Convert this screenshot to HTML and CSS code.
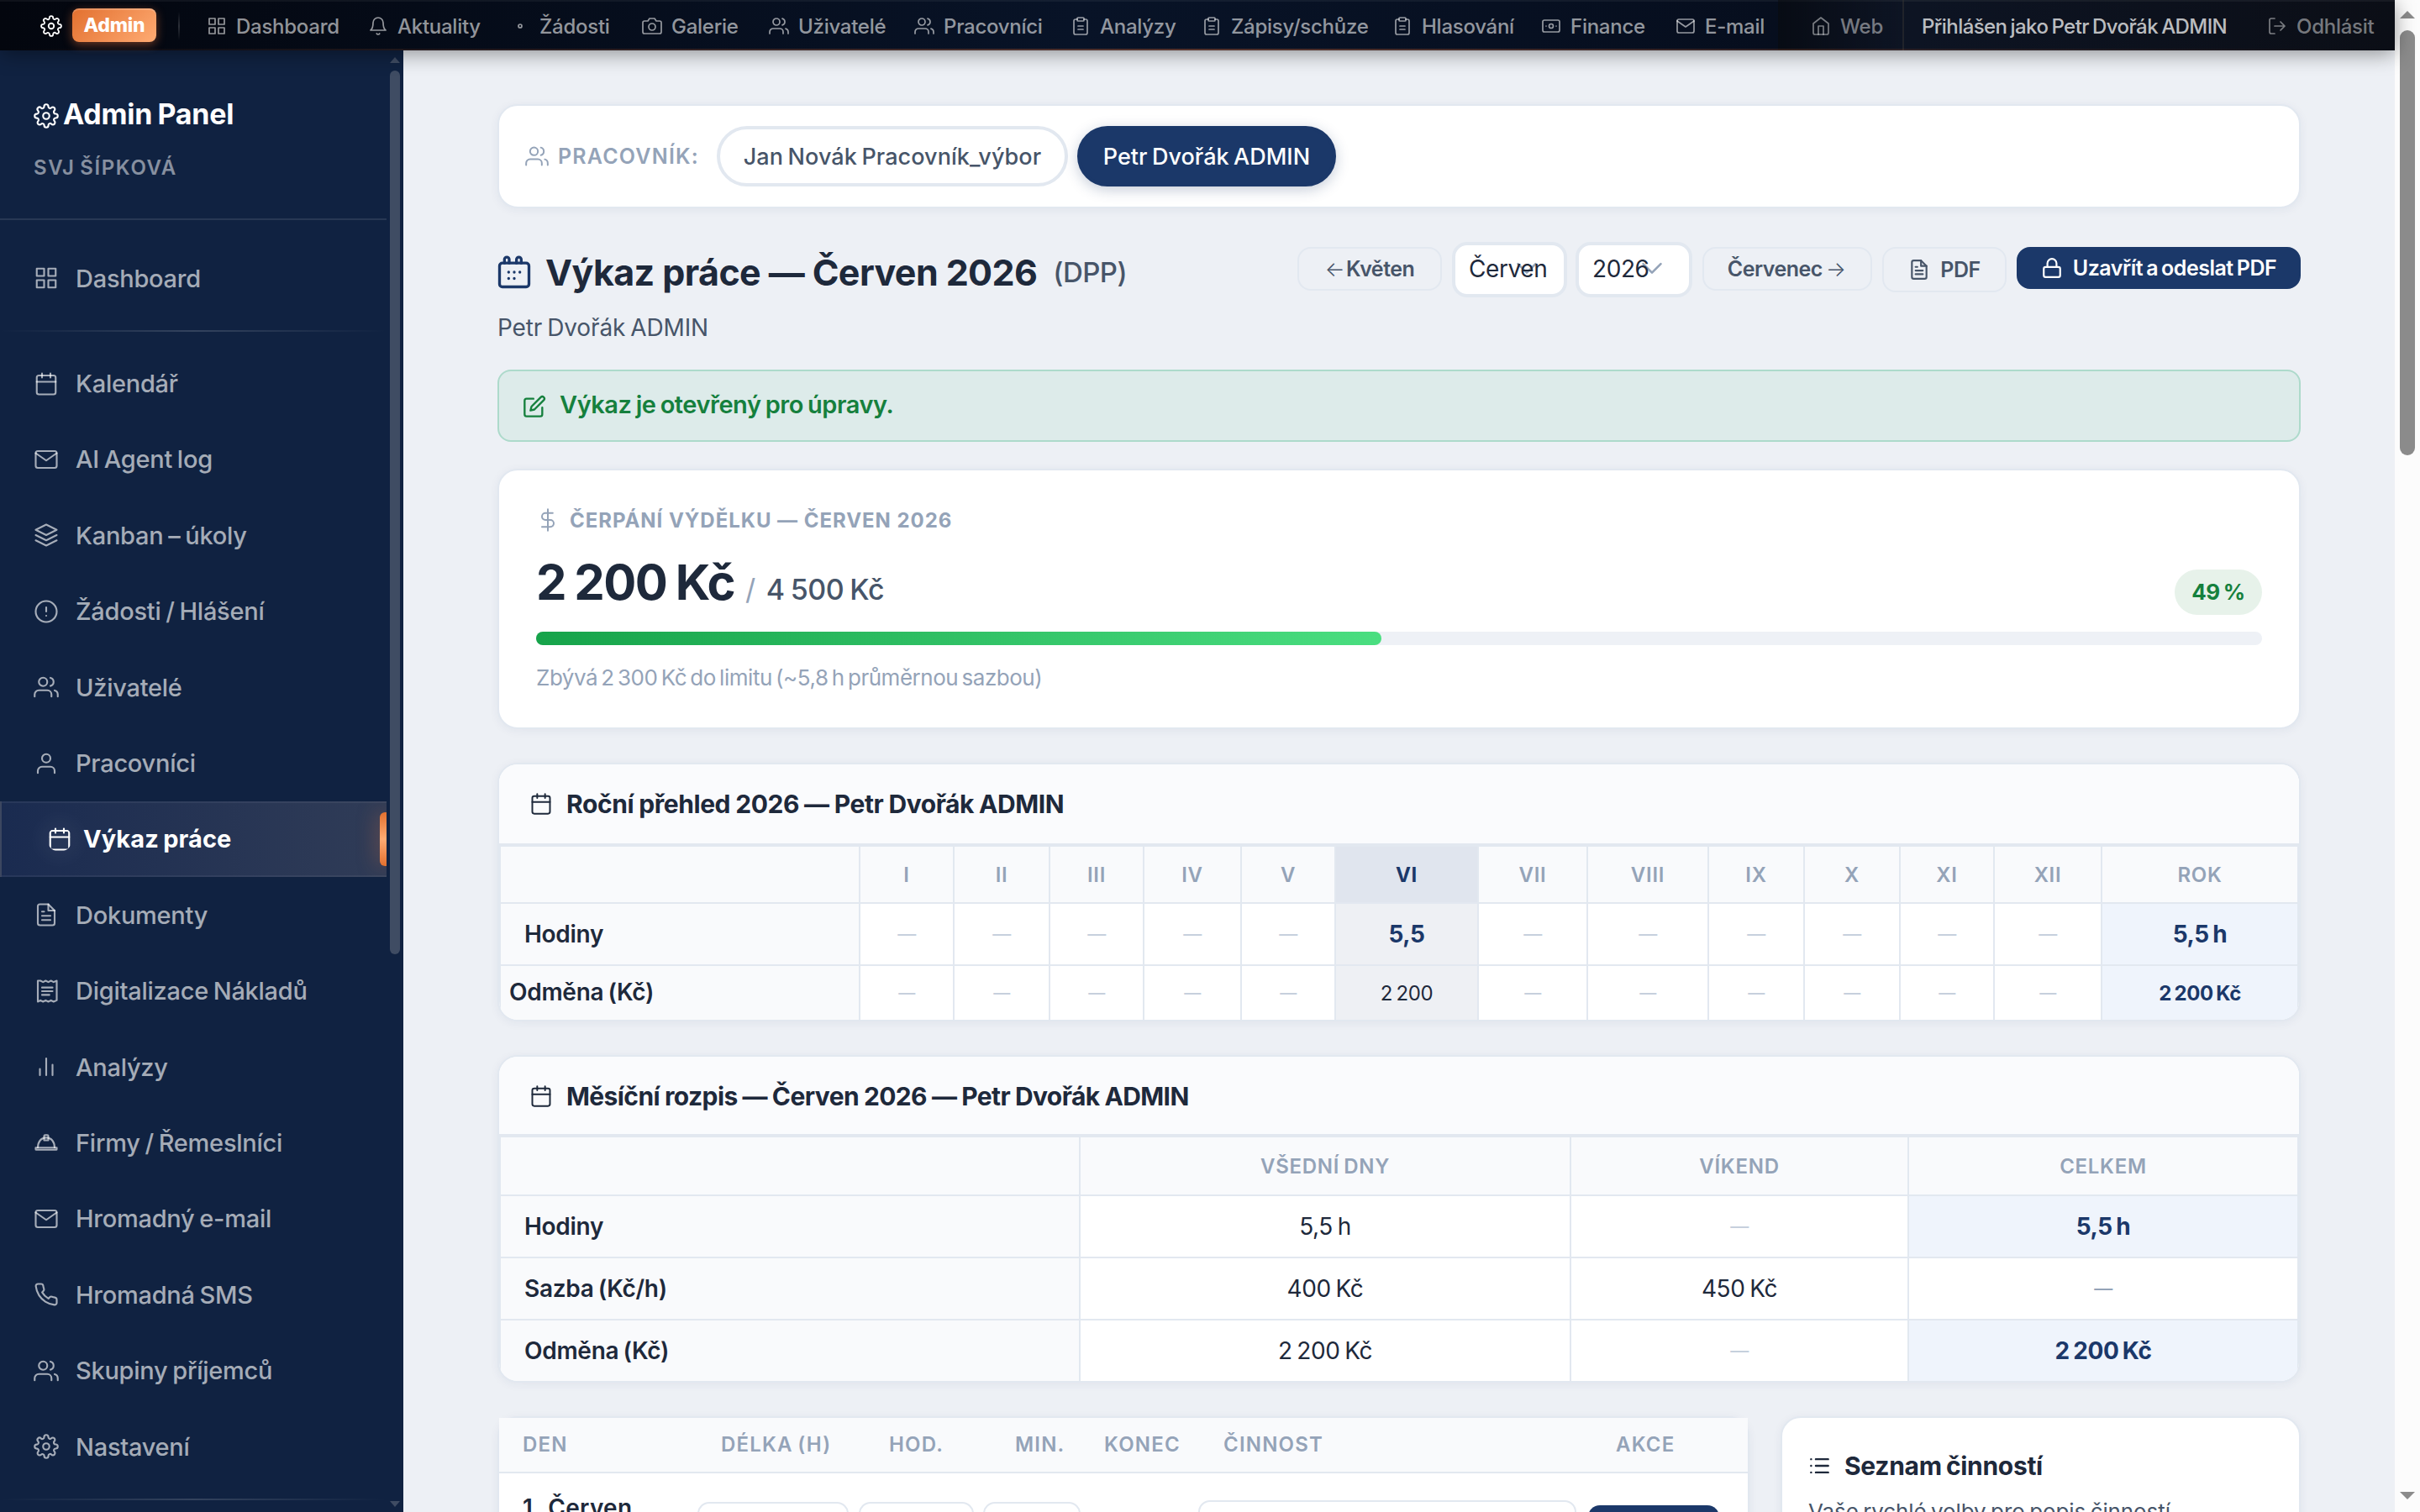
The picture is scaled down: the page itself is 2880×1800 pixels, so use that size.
FILE: index.html
```html
<!DOCTYPE html>
<html lang="cs">
  <head>
    <meta charset="UTF-8" />
    <meta name="viewport" content="width=device-width, initial-scale=1.0" />
    <title>Výkaz práce – Admin Panel</title>
    <link rel="stylesheet" href="styles.css">
  </head>
  <body>
    <svg class="sprite" aria-hidden="true">
      <symbol id="i-gear" viewBox="0 0 24 24"><circle cx="12" cy="12" r="3"/><path d="M19.4 15a1.65 1.65 0 0 0 .33 1.82l.06.06a2 2 0 1 1-2.83 2.83l-.06-.06a1.65 1.65 0 0 0-1.82-.33 1.65 1.65 0 0 0-1 1.51V21a2 2 0 0 1-4 0v-.09A1.65 1.65 0 0 0 9 19.4a1.65 1.65 0 0 0-1.82.33l-.06.06a2 2 0 1 1-2.83-2.83l.06-.06a1.65 1.65 0 0 0 .33-1.82 1.65 1.65 0 0 0-1.51-1H3a2 2 0 0 1 0-4h.09A1.65 1.65 0 0 0 4.6 9a1.65 1.65 0 0 0-.33-1.82l-.06-.06a2 2 0 1 1 2.83-2.83l.06.06a1.65 1.65 0 0 0 1.82.33H9a1.65 1.65 0 0 0 1-1.51V3a2 2 0 0 1 4 0v.09a1.65 1.65 0 0 0 1 1.51 1.65 1.65 0 0 0 1.82-.33l.06-.06a2 2 0 1 1 2.83 2.83l-.06.06a1.65 1.65 0 0 0-.33 1.82V9a1.65 1.65 0 0 0 1.51 1H21a2 2 0 0 1 0 4h-.09a1.65 1.65 0 0 0-1.51 1z"/></symbol>
      <symbol id="i-grid" viewBox="0 0 24 24"><rect x="3" y="3" width="7" height="7"/><rect x="14" y="3" width="7" height="7"/><rect x="3" y="14" width="7" height="7"/><rect x="14" y="14" width="7" height="7"/></symbol>
      <symbol id="i-bell" viewBox="0 0 24 24"><path d="M18 8A6 6 0 0 0 6 8c0 7-3 9-3 9h18s-3-2-3-9"/><path d="M13.73 21a2 2 0 0 1-3.46 0"/></symbol>
      <symbol id="i-dot" viewBox="0 0 24 24"><circle cx="12" cy="12" r="2"/></symbol>
      <symbol id="i-camera" viewBox="0 0 24 24"><path d="M23 19a2 2 0 0 1-2 2H3a2 2 0 0 1-2-2V8a2 2 0 0 1 2-2h4l2-3h6l2 3h4a2 2 0 0 1 2 2z"/><circle cx="12" cy="13" r="4"/></symbol>
      <symbol id="i-users" viewBox="0 0 24 24"><path d="M17 21v-2a4 4 0 0 0-4-4H5a4 4 0 0 0-4 4v2"/><circle cx="9" cy="7" r="4"/><path d="M23 21v-2a4 4 0 0 0-3-3.87"/><path d="M16 3.13a4 4 0 0 1 0 7.75"/></symbol>
      <symbol id="i-user" viewBox="0 0 24 24"><path d="M20 21v-2a4 4 0 0 0-4-4H8a4 4 0 0 0-4 4v2"/><circle cx="12" cy="7" r="4"/></symbol>
      <symbol id="i-clip" viewBox="0 0 24 24"><path d="M16 4h2a2 2 0 0 1 2 2v14a2 2 0 0 1-2 2H6a2 2 0 0 1-2-2V6a2 2 0 0 1 2-2h2"/><rect x="8" y="2" width="8" height="4" rx="1"/><path d="M9 12h6M9 16h6"/></symbol>
      <symbol id="i-cash" viewBox="0 0 24 24"><rect x="2" y="5" width="20" height="14" rx="2"/><circle cx="12" cy="12" r="2.5"/><path d="M6 12h.01M18 12h.01"/></symbol>
      <symbol id="i-mail" viewBox="0 0 24 24"><rect x="2" y="4" width="20" height="16" rx="2"/><path d="M22 6l-10 7L2 6"/></symbol>
      <symbol id="i-home" viewBox="0 0 24 24"><path d="M3 9l9-7 9 7v11a2 2 0 0 1-2 2H5a2 2 0 0 1-2-2z"/><path d="M9 22V12h6v10"/></symbol>
      <symbol id="i-logout" viewBox="0 0 24 24"><path d="M9 21H5a2 2 0 0 1-2-2V5a2 2 0 0 1 2-2h4M16 17l5-5-5-5M21 12H9"/></symbol>
      <symbol id="i-cal" viewBox="0 0 24 24"><rect x="3" y="4" width="18" height="18" rx="2"/><path d="M16 2v4M8 2v4M3 10h18"/></symbol>
      <symbol id="i-layers" viewBox="0 0 24 24"><path d="M12 2L2 7l10 5 10-5-10-5zM2 17l10 5 10-5M2 12l10 5 10-5"/></symbol>
      <symbol id="i-alert" viewBox="0 0 24 24"><circle cx="12" cy="12" r="10"/><path d="M12 8v4M12 16h.01"/></symbol>
      <symbol id="i-doc" viewBox="0 0 24 24"><path d="M14 2H6a2 2 0 0 0-2 2v16a2 2 0 0 0 2 2h12a2 2 0 0 0 2-2V8z"/><path d="M14 2v6h6M16 13H8M16 17H8M10 9H8"/></symbol>
      <symbol id="i-receipt" viewBox="0 0 24 24"><path d="M4 2v20l2.5-1.3L9 22l2.5-1.3L14 22l2.5-1.3L19 22l3-1.3V2l-3 1.3L16.500 2 14 3.300 11.500 2 9 3.300 6.500 2z"/><path d="M8 8.500h10M8 12h10M8 15.500h7"/></symbol>
      <symbol id="i-bars" viewBox="0 0 24 24"><path d="M18 20V10M12 20V4M6 20v-6"/></symbol>
      <symbol id="i-hat" viewBox="0 0 24 24"><path d="M2 17h20v1.500a.5.5 0 0 1-.5.5h-19a.5.5 0 0 1-.5-.5z"/><path d="M4 17c0-5.500 3-9.500 8-9.500s8 4 8 9.500"/><path d="M10 10V6a1 1 0 0 1 1-1h2a1 1 0 0 1 1 1v4z"/></symbol>
      <symbol id="i-phone" viewBox="0 0 24 24"><path d="M22 16.920v3a2 2 0 0 1-2.180 2 19.790 19.790 0 0 1-8.630-3.070 19.500 19.500 0 0 1-6-6A19.790 19.790 0 0 1 2.120 4.180 2 2 0 0 1 4.110 2h3a2 2 0 0 1 2 1.720c.13.960.36 1.900.7 2.810a2 2 0 0 1-.45 2.110L8.090 9.910a16 16 0 0 0 6 6l1.270-1.270a2 2 0 0 1 2.110-.45c.91.340 1.850.570 2.810.7A2 2 0 0 1 22 16.920z"/></symbol>
      <symbol id="i-calrings" viewBox="0 0 24 24"><rect x="1.500" y="5.500" width="21" height="17" rx="2"/><path d="M5 5.500V3a1.700 1.700 0 0 1 3.400 0v2.500M13.600 5.500V3a1.700 1.700 0 0 1 3.400 0v2.500M8 12h.01M12 12h.01M16 12h.01M8 16.500h.01M12 16.500h.01"/></symbol>
      <symbol id="i-edit" viewBox="0 0 24 24"><path d="M11 4H4a2 2 0 0 0-2 2v14a2 2 0 0 0 2 2h14a2 2 0 0 0 2-2v-7"/><path d="M18.500 2.500a2.120 2.120 0 0 1 3 3L12 15l-4 1 1-4z"/></symbol>
      <symbol id="i-dollar" viewBox="0 0 24 24"><path d="M12 1v22M17 5H9.500a3.500 3.500 0 0 0 0 7h5a3.500 3.500 0 0 1 0 7H6"/></symbol>
      <symbol id="i-lock" viewBox="0 0 24 24"><rect x="3" y="11" width="18" height="11" rx="2"/><path d="M7 11V7a5 5 0 0 1 10 0v4"/></symbol>
      <symbol id="i-list" viewBox="0 0 24 24"><path d="M8 5h13M8 12h13M8 19h13M3 5h.01M3 12h.01M3 19h.01"/></symbol>
      <symbol id="i-chevron" viewBox="0 0 24 24"><path d="M3 7l9 9 9-9"/></symbol>
    </svg>

    <header class="topbar">
      <svg class="icon topbar-gear"><use href="#i-gear"/></svg>
      <span class="topbar-badge">Admin</span>
      <span class="topbar-sep"></span>
      <nav class="topbar-nav">
        <a><svg class="icon"><use href="#i-grid"/></svg>Dashboard</a>
        <a><svg class="icon"><use href="#i-bell"/></svg>Aktuality</a>
        <a><svg class="icon"><use href="#i-dot"/></svg>Žádosti</a>
        <a><svg class="icon"><use href="#i-camera"/></svg>Galerie</a>
        <a><svg class="icon"><use href="#i-users"/></svg>Uživatelé</a>
        <a><svg class="icon"><use href="#i-users"/></svg>Pracovníci</a>
        <a><svg class="icon"><use href="#i-clip"/></svg>Analýzy</a>
        <a><svg class="icon"><use href="#i-clip"/></svg>Zápisy/schůze</a>
        <a><svg class="icon"><use href="#i-clip"/></svg>Hlasování</a>
        <a><svg class="icon"><use href="#i-cash"/></svg>Finance</a>
        <a><svg class="icon"><use href="#i-mail"/></svg>E-mail</a>
      </nav>
      <div class="topbar-right">
        <a class="topbar-web"><svg class="icon"><use href="#i-home"/></svg>Web</a>
        <span class="topbar-user">Přihlášen jako Petr Dvořák ADMIN</span>
        <a class="topbar-logout"><svg class="icon"><use href="#i-logout"/></svg>Odhlásit</a>
      </div>
    </header>

    <div class="layout">
      <aside class="sidebar">
        <div class="sidebar-body">
          <div class="sidebar-head">
            <div class="sidebar-title"><svg class="icon"><use href="#i-gear"/></svg>Admin Panel</div>
            <div class="sidebar-sub">SVJ ŠÍPKOVÁ</div>
          </div>
          <nav class="side-nav">
            <a><svg class="icon"><use href="#i-grid"/></svg>Dashboard</a>
            <hr />
            <a><svg class="icon"><use href="#i-cal"/></svg>Kalendář</a>
            <a><svg class="icon"><use href="#i-mail"/></svg>AI Agent log</a>
            <a><svg class="icon"><use href="#i-layers"/></svg>Kanban – úkoly</a>
            <a><svg class="icon"><use href="#i-alert"/></svg>Žádosti / Hlášení</a>
            <a><svg class="icon"><use href="#i-users"/></svg>Uživatelé</a>
            <a><svg class="icon"><use href="#i-user"/></svg>Pracovníci</a>
            <a class="active"><svg class="icon"><use href="#i-cal"/></svg>Výkaz práce</a>
            <a><svg class="icon"><use href="#i-doc"/></svg>Dokumenty</a>
            <a><svg class="icon"><use href="#i-receipt"/></svg>Digitalizace Nákladů</a>
            <a><svg class="icon"><use href="#i-bars"/></svg>Analýzy</a>
            <a><svg class="icon"><use href="#i-hat"/></svg>Firmy / Řemeslníci</a>
            <a><svg class="icon"><use href="#i-mail"/></svg>Hromadný e-mail</a>
            <a><svg class="icon"><use href="#i-phone"/></svg>Hromadná SMS</a>
            <a><svg class="icon"><use href="#i-users"/></svg>Skupiny příjemců</a>
            <a><svg class="icon"><use href="#i-gear"/></svg>Nastavení</a>
            <hr />
          </nav>
        </div>
        <div class="side-scroll">
          <span class="arrow up"></span>
          <span class="thumb"></span>
          <span class="arrow down"></span>
        </div>
      </aside>

      <main class="content">
        <section class="card picker">
          <span class="picker-label"><svg class="icon"><use href="#i-users"/></svg>PRACOVNÍK:</span>
          <a class="pill">Jan Novák Pracovník_výbor</a>
          <a class="pill pill-active">Petr Dvořák ADMIN</a>
        </section>

        <div class="page-head">
          <div>
            <h1><svg class="icon"><use href="#i-calrings"/></svg>Výkaz práce — Červen 2026 <small>(DPP)</small></h1>
            <p class="page-sub">Petr Dvořák ADMIN</p>
          </div>
          <div class="toolbar">
            <a class="btn btn-prev"><span class="arr">←</span>Květen</a>
            <div class="select select-month"><svg class="icon"><use href="#i-chevron"/></svg><span>Červen</span></div>
            <div class="select select-year"><svg class="icon"><use href="#i-chevron"/></svg><span>2026</span></div>
            <a class="btn btn-next">Červenec<span class="arr">→</span></a>
            <a class="btn btn-pdf"><svg class="icon"><use href="#i-doc"/></svg>PDF</a>
            <a class="btn btn-primary"><svg class="icon"><use href="#i-lock"/></svg>Uzavřít a odeslat PDF</a>
          </div>
        </div>

        <div class="alert"><svg class="icon"><use href="#i-edit"/></svg>Výkaz je otevřený pro úpravy.</div>

        <section class="card earnings">
          <div class="earnings-label"><svg class="icon"><use href="#i-dollar"/></svg>ČERPÁNÍ VÝDĚLKU — ČERVEN 2026</div>
          <div class="earnings-row">
            <div class="earnings-value"><b>2 200 Kč</b><i>/</i><span>4 500 Kč</span></div>
            <span class="earnings-pct">49 %</span>
          </div>
          <div class="progress"><div class="progress-fill" style="width: 49%"></div></div>
          <p class="earnings-note">Zbývá 2 300 Kč do limitu (~5,8 h průměrnou sazbou)</p>
        </section>

        <section class="card table-card">
          <h2><svg class="icon"><use href="#i-cal"/></svg>Roční přehled 2026 — Petr Dvořák ADMIN</h2>
          <table class="sheet year">
            <colgroup>
              <col class="y-label" /><col class="y1" /><col class="y2" /><col class="y3" /><col class="y4" /><col class="y5" /><col class="y6" /><col class="y7" /><col class="y8" /><col class="y9" /><col class="y10" /><col class="y11" /><col class="y12" /><col class="y-sum" />
            </colgroup>
            <tr>
              <th></th><th>I</th><th>II</th><th>III</th><th>IV</th><th>V</th><th class="now">VI</th><th>VII</th><th>VIII</th><th>IX</th><th>X</th><th>XI</th><th>XII</th><th>ROK</th>
            </tr>
            <tr class="hours">
              <td class="label">Hodiny</td><td class="nil">—</td><td class="nil">—</td><td class="nil">—</td><td class="nil">—</td><td class="nil">—</td><td class="now">5,5</td><td class="nil">—</td><td class="nil">—</td><td class="nil">—</td><td class="nil">—</td><td class="nil">—</td><td class="nil">—</td><td class="sum">5,5 h</td>
            </tr>
            <tr class="reward">
              <td class="label">Odměna (Kč)</td><td class="nil">—</td><td class="nil">—</td><td class="nil">—</td><td class="nil">—</td><td class="nil">—</td><td class="now">2 200</td><td class="nil">—</td><td class="nil">—</td><td class="nil">—</td><td class="nil">—</td><td class="nil">—</td><td class="nil">—</td><td class="sum">2 200 Kč</td>
            </tr>
          </table>
        </section>

        <section class="card table-card">
          <h2 class="h-month"><svg class="icon"><use href="#i-cal"/></svg>Měsíční rozpis — Červen 2026 — Petr Dvořák ADMIN</h2>
          <table class="sheet month">
            <colgroup>
              <col class="m-label" /><col class="m-work" /><col class="m-weekend" /><col class="m-sum" />
            </colgroup>
            <tr><th></th><th>VŠEDNÍ DNY</th><th>VÍKEND</th><th>CELKEM</th></tr>
            <tr><td class="label">Hodiny</td><td>5,5 h</td><td class="nil">—</td><td class="sum">5,5 h</td></tr>
            <tr><td class="label">Sazba (Kč/h)</td><td>400 Kč</td><td>450 Kč</td><td class="muted">—</td></tr>
            <tr><td class="label">Odměna (Kč)</td><td>2 200 Kč</td><td class="nil">—</td><td class="sum">2 200 Kč</td></tr>
          </table>
        </section>

        <div class="columns">
          <section class="card days">
            <div class="days-row days-head">
              <span>DEN</span><span>DÉLKA (H)</span><span>HOD.</span><span>MIN.</span><span>KONEC</span><span>ČINNOST</span><span>AKCE</span>
            </div>
            <div class="days-row days-item">
              <b>1. Červen</b>
              <span class="field"></span>
              <span class="field"></span>
              <span class="field"></span>
              <span></span>
              <span class="field field-text"></span>
              <span class="days-save"></span>
            </div>
          </section>
          <section class="card activities">
            <h3><svg class="icon"><use href="#i-list"/></svg>Seznam činností</h3>
            <p>Vaše rychlé volby pro popis činností.</p>
          </section>
        </div>
      </main>

      <div class="page-scroll">
        <span class="arrow up"></span>
        <span class="thumb"></span>
        <span class="arrow down"></span>
      </div>
    </div>
  </body>
</html>
```
FILE: styles.css
```css
:root {
  --navy: #1b3869;
  --sidebar: #102241;
  --bg: #edf0f5;
  --line: #e2e8f0;
  --text: #1e293b;
  --text-2: #475569;
  --muted: #94a3b8;
  --green: #15803d;
}

* {
  box-sizing: border-box;
}

body {
  margin: 0;
  width: 2880px;
  height: 1800px;
  overflow: hidden;
  font-family: Inter, "Open Sans", sans-serif;
  font-size: 28px;
  letter-spacing: -0.015em;
  word-spacing: -0.06em;
  color: var(--text);
  background: var(--bg);
}

h1,
h2,
h3,
p {
  margin: 0;
}

.sprite {
  display: none;
}

.icon {
  width: 28px;
  height: 28px;
  flex: none;
  fill: none;
  stroke: currentColor;
  stroke-width: 1.7;
  stroke-linecap: round;
  stroke-linejoin: round;
}

/* top bar */
.topbar {
  position: relative;
  z-index: 2;
  display: flex;
  align-items: center;
  width: 2850px;
  height: 60px;
  padding: 2px 0 0 48px;
  font-size: 24px;
  font-weight: 550;
  letter-spacing: -0.011em;
  color: rgba(255, 255, 255, 0.58);
  background: linear-gradient(90deg, #03060e, #081327 45%, #060d1c 80%, #04070f);
  box-shadow: 0 4px 24px rgba(0, 0, 0, 0.4), inset 0 2px 0 rgba(255, 255, 255, 0.05);
}

.topbar::after {
  content: "";
  position: absolute;
  left: 0;
  right: 0;
  bottom: 0;
  height: 2px;
  background: linear-gradient(90deg, transparent, rgba(232, 115, 58, 0.35), transparent);
}

.topbar .icon {
  width: 24px;
  height: 24px;
}

.topbar .topbar-gear {
  width: 26px;
  height: 26px;
  color: #fff;
}

.topbar-badge {
  width: 100px;
  height: 40px;
  margin: -2px 0 0 12px;
  border-radius: 8px;
  font-size: 23px;
  font-weight: 800;
  line-height: 41px;
  text-align: center;
  color: #fff;
  background: linear-gradient(135deg, #e2702f, #ffab73);
  box-shadow: 0 3px 12px rgba(232, 115, 58, 0.45), inset 0 2px 0 rgba(255, 255, 255, 0.2);
}

.topbar-sep {
  width: 2px;
  height: 34px;
  margin: 0 32px 0 26px;
  background: linear-gradient(transparent, rgba(255, 255, 255, 0.16), transparent);
}

.topbar-nav {
  display: grid;
  grid-template-columns: 192px 169px 157px 151px 173px 186px 156px 227px 177px 160px 120px;
}

.topbar a {
  display: flex;
  align-items: center;
  gap: 11px;
}

.topbar-right {
  display: flex;
  align-items: center;
  align-self: stretch;
  width: 734px;
  margin: -2px 0 0 auto;
  padding-top: 2px;
  background: rgba(255, 255, 255, 0.03);
}

.topbar .topbar-web {
  width: 150px;
  height: 60px;
  margin-top: -2px;
  padding: 2px 0 0 39px;
  border-right: 2px solid rgba(255, 255, 255, 0.1);
  color: rgba(255, 255, 255, 0.46);
  background: linear-gradient(90deg, rgba(0, 0, 0, 0.45), transparent);
}

.topbar-user {
  width: 432px;
  padding-left: 21px;
  letter-spacing: -0.024em;
  color: rgba(255, 255, 255, 0.74);
}

.topbar .topbar-logout {
  color: rgba(255, 255, 255, 0.46);
}

/* layout */
.layout {
  display: flex;
  width: 2880px;
  height: 1740px;
}

.sidebar {
  display: flex;
  justify-content: space-between;
  width: 480px;
  height: 1740px;
  flex: none;
  overflow: hidden;
  color: rgba(255, 255, 255, 0.63);
  background: var(--sidebar);
}

.sidebar-body {
  width: 460px;
}

.sidebar-head {
  height: 202px;
  padding: 53px 40px 0;
  border-bottom: 2px solid rgba(255, 255, 255, 0.1);
}

.sidebar-title {
  display: flex;
  align-items: center;
  gap: 5px;
  height: 44px;
  font-size: 34px;
  font-weight: 700;
  letter-spacing: -0.007em;
  color: #fff;
}

.sidebar-title .icon {
  width: 30px;
  height: 30px;
  margin-top: 6px;
}

.sidebar-sub {
  margin-top: 25px;
  font-size: 24px;
  font-weight: 600;
  line-height: 36px;
  letter-spacing: 0.066em;
  color: rgba(255, 255, 255, 0.5);
}

.side-nav {
  padding-top: 24px;
}

.side-nav a {
  position: relative;
  display: flex;
  align-items: center;
  gap: 20px;
  height: 90.4px;
  padding-left: 40px;
  font-size: 29px;
  font-weight: 500;
  letter-spacing: -0.009em;
}

.side-nav .icon {
  width: 30px;
  height: 30px;
}

.side-nav hr {
  height: 2px;
  margin: 17px 0 16px;
  border: 0;
  background: linear-gradient(90deg, transparent, rgba(255, 255, 255, 0.15), transparent);
}

.side-nav .active {
  gap: 13px;
  padding-left: 54px;
  border: 2px solid rgba(255, 255, 255, 0.06);
  border-right: 0;
  font-weight: 700;
  letter-spacing: 0.003em;
  color: #fff;
  background: linear-gradient(90deg, #1a2b50, #303c57);
}

.side-nav .active .icon {
  border-radius: 50%;
  background: rgba(255, 255, 255, 0.04);
  box-shadow: 0 0 24px 10px rgba(255, 255, 255, 0.04);
}

.side-nav .active::after {
  content: "";
  position: absolute;
  top: 11px;
  right: 0;
  width: 8px;
  height: 64px;
  border-radius: 6px 0 0 6px;
  background: linear-gradient(#e2702f, #ffab73, #e2702f);
  box-shadow: 0 0 24px rgba(232, 115, 58, 0.55);
  clip-path: inset(-13px 0 -13px -30px);
}

/* scrollbars */
.side-scroll,
.page-scroll {
  display: flex;
  flex-direction: column;
  align-items: center;
}

.side-scroll {
  width: 12px;
  margin-right: 4px;
  padding: 8px 0 6px;
}

.side-scroll .thumb {
  width: 12px;
  height: 1052px;
  margin: 9px 0 auto;
  border-radius: 6px;
  background: #3f4c63;
}

.page-scroll {
  width: 30px;
  height: 1800px;
  margin-top: -60px;
  padding: 13px 0 15px;
  background: #fcfcfc;
}

.page-scroll .thumb {
  width: 18px;
  height: 506px;
  margin: 14px 0 auto;
  border-radius: 9px;
  background: #8b8b8b;
}

.arrow {
  width: 18px;
  height: 9px;
  background: #8b8b8b;
}

.side-scroll .arrow {
  width: 12px;
  height: 7px;
  background: #3f4c63;
}

.arrow.up {
  clip-path: polygon(50% 0, 100% 100%, 0 100%);
}

.arrow.down {
  clip-path: polygon(0 0, 100% 0, 50% 100%);
}

/* content */
.content {
  width: 2370px;
  height: 1740px;
  padding: 64px 112px 0;
  overflow: hidden;
}

.card {
  border: 2px solid var(--line);
  border-radius: 24px;
  background: #fff;
  box-shadow: 0 2px 12px rgba(30, 58, 110, 0.06);
}

.picker {
  display: flex;
  align-items: center;
  height: 124px;
  padding-left: 31px;
}

.picker-label {
  display: flex;
  align-items: center;
  gap: 11px;
  width: 228px;
  font-size: 25px;
  font-weight: 600;
  letter-spacing: 0.048em;
  color: var(--muted);
}

.pill {
  display: flex;
  align-items: center;
  justify-content: center;
  width: 418px;
  height: 72px;
  margin-right: 11px;
  border: 4px solid var(--line);
  border-radius: 36px;
  font-size: 27px;
  font-weight: 500;
  letter-spacing: 0.002em;
  color: var(--text-2);
}

.pill-active {
  width: 308px;
  border-color: var(--navy);
  letter-spacing: 0;
  color: #fff;
  background: var(--navy);
  box-shadow: 0 4px 16px rgba(27, 56, 105, 0.25);
}

.page-head {
  display: flex;
  justify-content: space-between;
  margin-top: 40px;
}

.page-head h1 {
  display: flex;
  align-items: center;
  height: 60px;
  margin-top: 6px;
  font-size: 43px;
  font-weight: 740;
  letter-spacing: -0.014em;
  word-spacing: 0;
}

.page-head h1 .icon {
  width: 40px;
  height: 40px;
  margin-right: 17px;
  stroke-width: 2;
  color: var(--navy);
}

.page-head h1 small {
  margin-left: 19px;
  font-size: 33px;
  font-weight: 500;
  color: var(--text-2);
}

.page-sub {
  margin-top: 16px;
  font-size: 28px;
  line-height: 40px;
  letter-spacing: -0.005em;
  color: var(--text-2);
}

.toolbar {
  display: flex;
  align-items: flex-start;
}

.btn {
  display: flex;
  align-items: center;
  justify-content: center;
  height: 52px;
  margin: 6px 12px 0 0;
  border: 2px solid var(--line);
  border-radius: 16px;
  font-size: 25px;
  font-weight: 600;
  letter-spacing: -0.02em;
  color: var(--text-2);
}

.btn .icon {
  width: 26px;
  height: 26px;
  margin-right: 12px;
  stroke-width: 2;
}

.arr {
  margin: 0 2px 0 4px;
  font-weight: 300;
}

.btn-prev {
  width: 172px;
  padding-right: 4px;
}

.btn-next {
  width: 202px;
}

.btn-pdf {
  width: 148px;
  height: 54px;
}

.btn-primary {
  width: 338px;
  height: 50px;
  margin-right: 0;
  border-color: var(--navy);
  color: #fff;
  background: var(--navy);
}

.select {
  position: relative;
  width: 137px;
  height: 66px;
  margin-right: 10px;
  padding-left: 16px;
  border: 4px solid var(--line);
  border-radius: 18px;
  font-size: 28px;
  line-height: 57px;
  background: #fff;
}

.select span {
  position: relative;
}

.select-year {
  width: 139px;
  margin-right: 12px;
}

.select .icon {
  position: absolute;
  top: 14px;
  right: 30px;
  stroke-width: 2.2;
  color: var(--muted);
}

.alert {
  display: flex;
  align-items: center;
  gap: 16px;
  height: 86px;
  margin: 30px 0 32px;
  padding: 0 0 3px 28px;
  border: 2px solid #addacb;
  border-radius: 16px;
  font-size: 29px;
  font-weight: 600;
  letter-spacing: -0.016em;
  color: var(--green);
  background: #ddebea;
}

.alert .icon {
  margin-top: 4px;
  stroke-width: 2;
}

/* earnings */
.earnings {
  padding: 39px 44px 40px;
}

.earnings-label {
  display: flex;
  align-items: center;
  gap: 12px;
  height: 40px;
  font-size: 24px;
  font-weight: 650;
  letter-spacing: 0.04em;
  word-spacing: 0;
  color: var(--muted);
}

.earnings-row {
  display: flex;
  justify-content: space-between;
  align-items: flex-end;
  height: 74px;
  margin: 19px 0 20px;
}

.earnings-value {
  align-self: flex-start;
  font-size: 34px;
  line-height: 70px;
  color: var(--text-2);
}

.earnings-value b {
  font-size: 58px;
  font-weight: 740;
  letter-spacing: -0.028em;
  color: var(--text);
}

.earnings-value i {
  margin: 0 13px;
  font-style: normal;
  color: var(--muted);
}

.earnings-value span {
  font-weight: 500;
}

.earnings-pct {
  width: 104px;
  height: 54px;
  border-radius: 27px;
  font-size: 26px;
  font-weight: 700;
  line-height: 54px;
  text-align: center;
  color: var(--green);
  background: #e7f2ea;
}

.progress {
  height: 16px;
  border-radius: 8px;
  background: #eef1f6;
}

.progress-fill {
  height: 16px;
  border-radius: 8px;
  background: linear-gradient(90deg, #16a34a, #4ade80);
}

.earnings-note {
  margin-top: 20px;
  font-size: 26px;
  line-height: 38px;
  letter-spacing: -0.018em;
  word-spacing: -0.1em;
  color: var(--muted);
}

/* overview tables */
.table-card {
  margin-top: 40px;
  overflow: hidden;
}

.table-card h2 {
  display: flex;
  align-items: center;
  gap: 16px;
  height: 98px;
  padding-left: 36px;
  border-bottom: 4px solid var(--line);
  font-size: 30px;
  font-weight: 700;
  word-spacing: -0.02em;
  background: #fafbfd;
}

.table-card .h-month {
  height: 96px;
  padding-top: 1px;
  letter-spacing: -0.02em;
}

.sheet {
  width: 2142px;
  table-layout: fixed;
  border-collapse: separate;
  border-spacing: 0;
  border: solid var(--line);
  border-width: 0 2px;
}

.sheet th,
.sheet td {
  height: 74px;
  padding: 0;
  border-right: 2px solid var(--line);
  border-bottom: 2px solid var(--line);
  text-align: center;
}

.sheet th:last-child,
.sheet td:last-child {
  border-right: 0;
}

.sheet tr:last-child td {
  border-bottom: 0;
  height: 72px;
}

.sheet th {
  height: 68px;
  font-size: 24px;
  font-weight: 600;
  letter-spacing: 0.03em;
  color: var(--muted);
  background: #f9fafc;
}

.month th {
  height: 70px;
}

.sheet .label {
  padding-left: 28px;
  font-weight: 600;
  letter-spacing: -0.01em;
  text-align: left;
  background: #f9fafc;
}

.sheet .nil {
  color: #c6d0dd;
}

.nil,
.muted {
  font-size: 22px;
  font-weight: 500;
}

.sheet .muted {
  color: var(--muted);
}

.sheet .sum {
  font-weight: 700;
  color: var(--navy);
  background: #eff4fc;
}

.year th.now {
  font-weight: 700;
  color: var(--navy);
  background: #e0e5ee;
}

.year td.now {
  background: #eef0f4;
}

.hours .now {
  font-weight: 700;
  color: var(--navy);
}

.year tr.reward:last-child td {
  height: 64px;
  font-size: 24px;
}

.year tr.reward:last-child .label {
  padding: 0 0 2px 10px;
  font-size: 28px;
}

.year tr.reward:last-child .nil {
  font-size: 20px;
}

.y-label { width: 428px; }
.y1, .y3, .y5, .y11 { width: 112px; }
.y2, .y9, .y10 { width: 114px; }
.y4 { width: 116px; }
.y6 { width: 170px; }
.y7 { width: 130px; }
.y8 { width: 144px; }
.y12 { width: 128px; }
.y-sum { width: 232px; }

.m-label { width: 690px; }
.m-work { width: 584px; }
.m-weekend { width: 402px; }
.m-sum { width: 462px; }

/* day entries + activities */
.columns {
  display: grid;
  grid-template-columns: 1490px 619px;
  gap: 37px;
  height: 300px;
  margin-top: 40px;
}

.days-row {
  display: grid;
  grid-template-columns: 236px 200px 150px 106px 142px 467px 185px;
}

.days-head {
  height: 66px;
  border-bottom: 2px solid var(--line);
  font-size: 24px;
  font-weight: 600;
  line-height: 63px;
  letter-spacing: 0.05em;
  color: var(--muted);
  background: #f9fafc;
}

.days-head span {
  padding-left: 28px;
}

.days-item {
  grid-template-columns: 236px 192px 148px 116px 140px 464px 156px;
  align-items: start;
  padding-top: 32px;
}

.days-item b {
  margin-top: -8px;
  padding-left: 28px;
  font-weight: 600;
  letter-spacing: 0.01em;
  word-spacing: 0.08em;
}

.field {
  width: 180px;
  height: 56px;
  margin-top: 2px;
  border: 2px solid var(--line);
  border-radius: 14px;
}

.field:nth-child(3) {
  width: 137px;
}

.field:nth-child(4) {
  width: 116px;
}

.field-text {
  width: 450px;
  margin-top: 0;
}

.days-save {
  height: 52px;
  margin-top: 6px;
  border-radius: 14px;
  background: var(--navy);
}

.activities {
  padding: 36px 31px;
}

.activities h3 {
  display: flex;
  align-items: center;
  gap: 16px;
  height: 42px;
  font-size: 30px;
  font-weight: 700;
  letter-spacing: -0.01em;
}

.activities h3 .icon {
  width: 27px;
  stroke-width: 2.2;
}

.activities p {
  margin-top: 16px;
  font-size: 26px;
  line-height: 36px;
  letter-spacing: -0.004em;
  color: var(--text-2);
}
```
